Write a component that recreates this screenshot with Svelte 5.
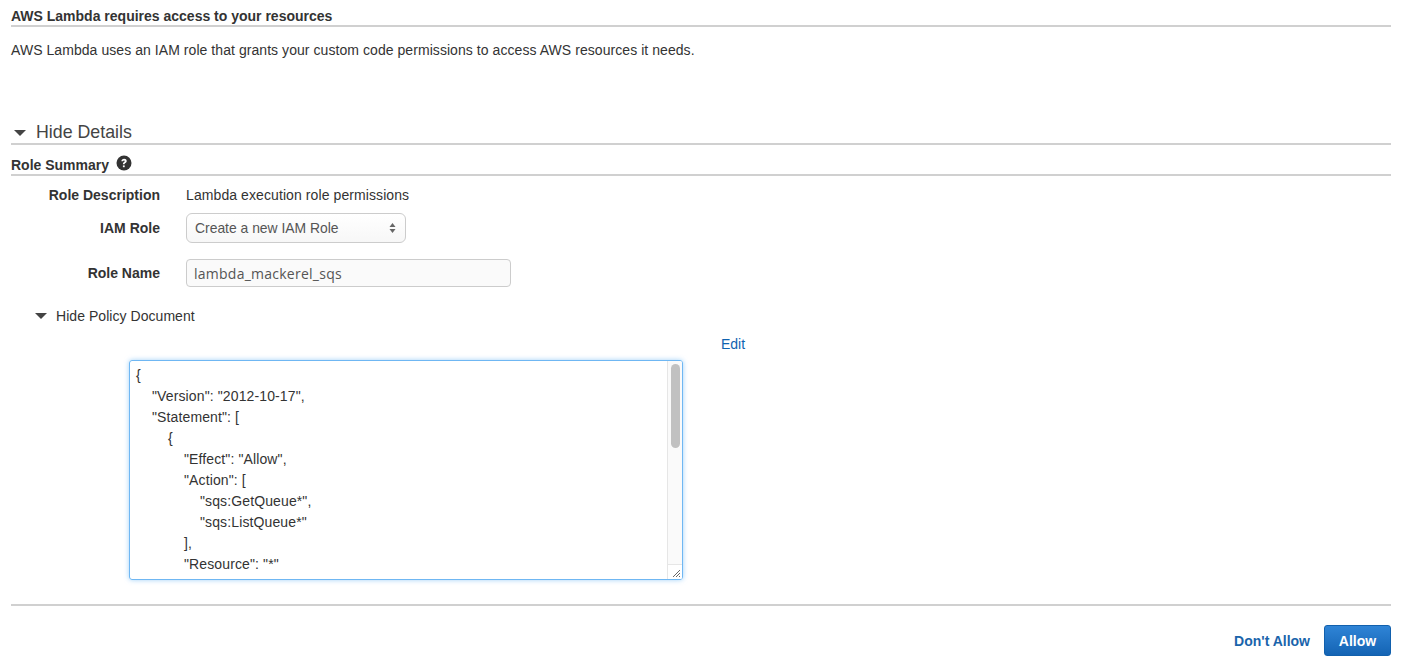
<script lang="ts">
	const policy = [
		{ indent: 0, text: '{' },
		{ indent: 1, text: '"Version": "2012-10-17",' },
		{ indent: 1, text: '"Statement": [' },
		{ indent: 2, text: '{' },
		{ indent: 3, text: '"Effect": "Allow",' },
		{ indent: 3, text: '"Action": [' },
		{ indent: 4, text: '"sqs:GetQueue*",' },
		{ indent: 4, text: '"sqs:ListQueue*"' },
		{ indent: 3, text: '],' },
		{ indent: 3, text: '"Resource": "*"' }
	];
</script>

<div class="page">
	<h2 class="title">AWS Lambda requires access to your resources</h2>
	<p class="intro">AWS Lambda uses an IAM role that grants your custom code permissions to access AWS resources it needs.</p>

	<div class="details-head">
		<span class="caret"></span>
		<span>Hide Details</span>
	</div>

	<div class="summary-head">
		<span>Role Summary</span>
		<svg class="help" width="16" height="16" viewBox="0 0 16 16" aria-hidden="true">
			<circle cx="8" cy="8" r="7.5" fill="#333" />
			<path d="M5.4 6.2c0-1.6 1.2-2.5 2.7-2.5s2.6.9 2.6 2.2c0 1.1-.6 1.6-1.3 2.1-.6.4-.8.7-.8 1.3H6.900c0-1.100.4-1.700 1.100-2.200.6-.4.800-.6.800-1 0-.4-.3-.7-.8-.7-.6 0-.9.3-1 .9z" fill="#fff" />
			<rect x="6.900" y="10.400" width="1.800" height="1.800" fill="#fff" />
		</svg>
	</div>

	<div class="form">
		<div class="row row-desc">
			<div class="label">Role Description</div>
			<div class="value">Lambda execution role permissions</div>
		</div>
		<div class="row row-role">
			<div class="label">IAM Role</div>
			<div class="select">
				<span>Create a new IAM Role</span>
				<svg width="7" height="12" viewBox="0 0 7 12" aria-hidden="true">
					<path d="M3.500 1 6.500 5H.5zM3.500 11 .5 7h6z" fill="#666" />
				</svg>
			</div>
		</div>
		<div class="row row-name">
			<div class="label">Role Name</div>
			<div class="input">lambda_mackerel_sqs</div>
		</div>
	</div>

	<div class="policy-toggle">
		<span class="caret small"></span>
		<span>Hide Policy Document</span>
	</div>

	<div class="edit-row"><span class="link">Edit</span></div>

	<div class="editor">
		<div class="code">
			{#each policy as line}
				<div class="code-line" style="padding-left: {line.indent * 16}px">{line.text}</div>
			{/each}
		</div>
		<div class="scrollbar">
			<div class="thumb"></div>
		</div>
		<div class="corner">
			<svg width="15" height="15" viewBox="0 0 15 15" aria-hidden="true">
				<path d="M6 13 13 6M9 13l4-4M12 13l1-1" stroke="#666" stroke-width="1" fill="none" />
			</svg>
		</div>
	</div>

	<div class="footer">
		<span class="deny">Don't Allow</span>
		<div class="allow">Allow</div>
	</div>
</div>

<style>
	:global(body) {
		background: #fff;
	}

	.page {
		height: 662px;
		box-sizing: border-box;
		padding: 0 10px 0 11px;
		font-family: 'Liberation Sans', Arial, sans-serif;
		font-size: 14px;
		color: #333;
		overflow: hidden;
	}

	.title {
		margin: 0;
		height: 27px;
		box-sizing: border-box;
		padding-top: 8px;
		line-height: 16px;
		font-size: 14px;
		font-weight: 700;
		border-bottom: 2px solid #d0d0d0;
	}

	.intro {
		margin: 0;
		padding-top: 14px;
		line-height: 18px;
		font-size: 14px;
		letter-spacing: 0.06px;
	}

	.details-head {
		display: flex;
		align-items: center;
		gap: 10px;
		height: 34px;
		margin-top: 52px;
		padding-left: 3px;
		box-sizing: border-box;
		padding-top: 9px;
		font-size: 17.800px;
		color: #444;
		border-bottom: 2px solid #d0d0d0;
		line-height: 22px;
	}

	.caret {
		width: 0;
		height: 0;
		border-left: 6px solid transparent;
		border-right: 6px solid transparent;
		border-top: 6px solid #444;
		margin-top: 2px;
	}

	.caret.small {
		margin-top: 0;
	}

	.summary-head {
		display: flex;
		align-items: center;
		gap: 7px;
		height: 31px;
		box-sizing: border-box;
		font-size: 14px;
		font-weight: 700;
		border-bottom: 2px solid #d0d0d0;
		padding-top: 10px;
	}

	.help {
		margin-top: -3px;
	}

	.row {
		display: flex;
		align-items: center;
		gap: 26px;
	}

	.label {
		width: 149px;
		text-align: right;
		font-weight: 700;
		font-size: 14px;
	}

	.row-desc {
		height: 38px;
	}

	.value {
		color: #333;
		letter-spacing: 0.09px;
	}

	.row-role {
		height: 28px;
	}

	.select {
		box-sizing: border-box;
		width: 220px;
		height: 30px;
		display: flex;
		align-items: center;
		justify-content: space-between;
		padding: 0 9px 0 8px;
		border: 1px solid #ccc;
		border-radius: 6px;
		background: linear-gradient(#fff, #f7f7f7);
		color: #555;
		font-size: 13.900px;
	}

	.row-name {
		height: 28px;
		margin-top: 17px;
	}

	.input {
		box-sizing: border-box;
		width: 325px;
		height: 28px;
		line-height: 27px;
		padding-left: 7px;
		border: 1px solid #ccc;
		border-radius: 4px;
		background: #fafafa;
		color: #555;
		font-family: 'Open Sans', 'Liberation Sans', sans-serif;
		font-size: 14px;
		letter-spacing: 0.25px;
	}

	.policy-toggle {
		display: flex;
		align-items: center;
		gap: 9px;
		height: 20px;
		margin-top: 19px;
		padding-left: 24px;
		letter-spacing: 0.05px;
	}

	.edit-row {
		height: 20px;
		margin-top: 8px;
		padding-left: 710px;
		line-height: 20px;
	}

	.link {
		color: #0f63b0;
	}

	.editor {
		position: relative;
		box-sizing: border-box;
		display: flex;
		width: 554px;
		height: 220px;
		margin: 6px 0 0 118px;
		border: 1px solid #6fb7f3;
		border-radius: 3px;
		box-shadow: 0 0 5px rgba(100, 180, 245, 0.6);
		overflow: hidden;
	}

	.code {
		flex: 1;
		padding: 4px 6px;
		line-height: 21px;
		font-size: 14px;
		letter-spacing: 0.12px;
		color: #333;
	}

	.code-line {
		white-space: pre;
	}

	.scrollbar {
		width: 15px;
		background: #fafafa;
		border-left: 1px solid #e6e6e6;
		padding: 3px 2px 0 3px;
		box-sizing: border-box;
	}

	.thumb {
		width: 9px;
		height: 84px;
		border-radius: 5px;
		background: #c1c1c1;
	}

	.corner {
		position: absolute;
		right: 0;
		bottom: 0;
		width: 15px;
		height: 15px;
		background: #fff;
		border-top: 1px solid #e6e6e6;
		border-left: 1px solid #e6e6e6;
		box-sizing: border-box;
	}

	.corner svg {
		display: block;
		margin: -1px 0 0 -1px;
	}

	.footer {
		display: flex;
		justify-content: flex-end;
		align-items: center;
		gap: 14px;
		margin-top: 24px;
		padding-top: 19px;
		border-top: 2px solid #d0d0d0;
	}

	.deny {
		color: #1a64ab;
		font-weight: 700;
	}

	.allow {
		box-sizing: border-box;
		width: 67px;
		height: 31px;
		line-height: 30px;
		text-align: center;
		border: 1px solid #1160ad;
		border-radius: 3px;
		background: linear-gradient(#2f84d6, #1464b4);
		color: #fff;
		font-weight: 700;
	}
</style>
